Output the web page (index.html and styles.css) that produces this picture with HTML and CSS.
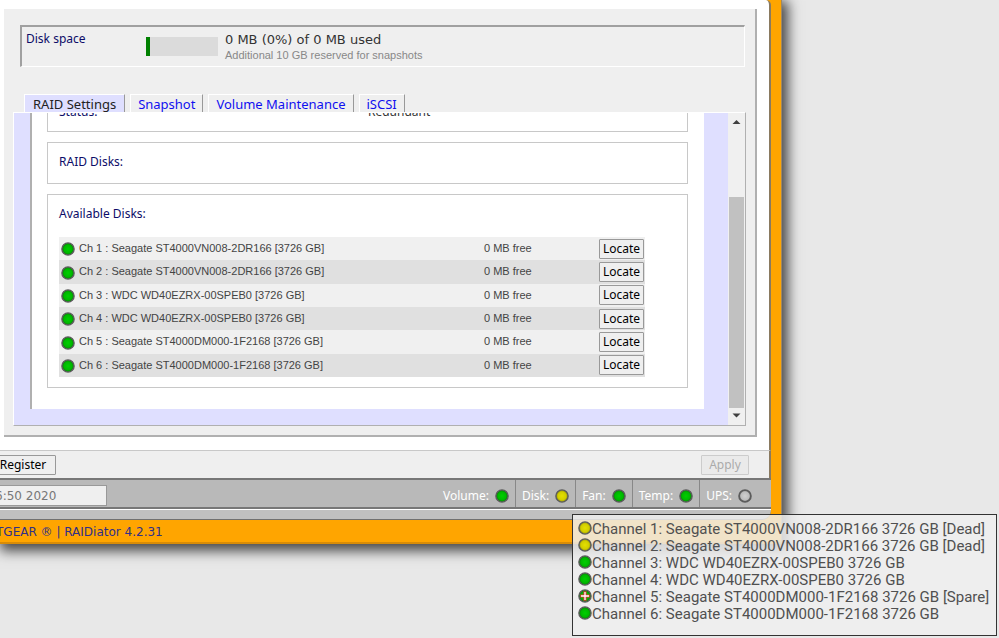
FILE: index.html
```html
<!DOCTYPE html>
<html lang="en">
<head>
<meta charset="utf-8">
<title>RAIDiator - Volume Settings</title>
<link rel="stylesheet" href="styles.css">
</head>
<body>
<svg class="defs" aria-hidden="true">
  <defs>
    <radialGradient id="g-green"><stop offset="0" stop-color="#00d000"/><stop offset="0.65" stop-color="#00b800"/><stop offset="1" stop-color="#087808"/></radialGradient>
    <radialGradient id="g-yellow"><stop offset="0" stop-color="#e4e000"/><stop offset="0.65" stop-color="#d2ce00"/><stop offset="1" stop-color="#8c8a08"/></radialGradient>
    <radialGradient id="g-gray"><stop offset="0" stop-color="#d0d0d0"/><stop offset="0.7" stop-color="#bcbcbc"/><stop offset="1" stop-color="#8a8a8a"/></radialGradient>
    <symbol id="green" viewBox="0 0 14 14"><circle cx="7" cy="7" r="6.1" fill="url(#g-green)" stroke="#5c5c5c" stroke-width="1.4"/></symbol>
    <symbol id="yellow" viewBox="0 0 14 14"><circle cx="7" cy="7" r="6.1" fill="url(#g-yellow)" stroke="#5c5c5c" stroke-width="1.4"/></symbol>
    <symbol id="gray" viewBox="0 0 14 14"><circle cx="7" cy="7" r="5.9" fill="url(#g-gray)" stroke="#5c5c5c" stroke-width="1.8"/></symbol>
    <symbol id="spare" viewBox="0 0 14 14"><circle cx="7" cy="7" r="6.1" fill="url(#g-green)" stroke="#5c5c5c" stroke-width="1.4"/><path d="M7 2.2v9.6M2.2 7h9.6" stroke="#e03030" stroke-width="3.2"/><path d="M7 3v8M3 7h8" stroke="#fff" stroke-width="1.3"/></symbol>
  </defs>
</svg>
<div class="window">
  <div class="page">
    <main class="panel">
      <section class="usage">
        <span class="usage-label">Disk space</span>
        <div class="meter"></div>
        <div class="usage-text">
          <div class="used">0 MB (0%) of 0 MB used</div>
          <div class="reserved">Additional 10 GB reserved for snapshots</div>
        </div>
      </section>
      <nav class="tabs">
        <a class="tab active" href="#">RAID Settings</a>
        <a class="tab" href="#">Snapshot</a>
        <a class="tab" href="#">Volume Maintenance</a>
        <a class="tab" href="#">iSCSI</a>
      </nav>
      <div class="frame">
        <div class="view">
          <div class="sheet">
            <section class="group status"><span>Status:</span><span class="value">Redundant</span></section>
            <section class="group raid"><h2>RAID Disks:</h2></section>
            <section class="group available">
              <h2>Available Disks:</h2>
              <table class="disks">
                <tr><td class="name"><svg class="led"><use href="#green"/></svg>Ch 1 : Seagate ST4000VN008-2DR166 [3726 GB]</td><td class="free">0 MB free</td><td class="act"><button class="btn">Locate</button></td></tr>
                <tr><td class="name"><svg class="led"><use href="#green"/></svg>Ch 2 : Seagate ST4000VN008-2DR166 [3726 GB]</td><td class="free">0 MB free</td><td class="act"><button class="btn">Locate</button></td></tr>
                <tr><td class="name"><svg class="led"><use href="#green"/></svg>Ch 3 : WDC WD40EZRX-00SPEB0 [3726 GB]</td><td class="free">0 MB free</td><td class="act"><button class="btn">Locate</button></td></tr>
                <tr><td class="name"><svg class="led"><use href="#green"/></svg>Ch 4 : WDC WD40EZRX-00SPEB0 [3726 GB]</td><td class="free">0 MB free</td><td class="act"><button class="btn">Locate</button></td></tr>
                <tr><td class="name"><svg class="led"><use href="#green"/></svg>Ch 5 : Seagate ST4000DM000-1F2168 [3726 GB]</td><td class="free">0 MB free</td><td class="act"><button class="btn">Locate</button></td></tr>
                <tr><td class="name"><svg class="led"><use href="#green"/></svg>Ch 6 : Seagate ST4000DM000-1F2168 [3726 GB]</td><td class="free">0 MB free</td><td class="act"><button class="btn">Locate</button></td></tr>
              </table>
            </section>
          </div>
        </div>
        <div class="scrollbar">
          <svg class="arrow" viewBox="0 0 17 17"><path d="M4.500 11L8.500 7L12.500 11z" fill="#404040"/></svg>
          <div class="track"><div class="thumb"></div></div>
          <svg class="arrow" viewBox="0 0 17 17"><path d="M4.500 5.500L8.500 9.500L12.500 5.500z" fill="#404040"/></svg>
        </div>
      </div>
    </main>
  </div>
  <div class="actions">
    <button class="btn register">Register</button>
    <button class="btn apply" disabled>Apply</button>
  </div>
  <div class="statusbar">
    <input class="clock" type="text" value="6:50 2020" aria-label="System time" readonly>
    <div class="lights">
      <span class="light">Volume:<svg class="led"><use href="#green"/></svg></span>
      <span class="light">Disk:<svg class="led"><use href="#yellow"/></svg></span>
      <span class="light">Fan:<svg class="led"><use href="#green"/></svg></span>
      <span class="light">Temp:<svg class="led"><use href="#green"/></svg></span>
      <span class="light">UPS:<svg class="led"><use href="#gray"/></svg></span>
    </div>
  </div>
  <div class="strip"></div>
  <footer class="footer"><span>TGEAR ® | RAIDiator 4.2.31</span></footer>
</div>
<ul class="tooltip">
  <li><svg class="led"><use href="#yellow"/></svg>Channel 1: Seagate ST4000VN008-2DR166 3726 GB [Dead]</li>
  <li><svg class="led"><use href="#yellow"/></svg>Channel 2: Seagate ST4000VN008-2DR166 3726 GB [Dead]</li>
  <li><svg class="led"><use href="#green"/></svg>Channel 3: WDC WD40EZRX-00SPEB0 3726 GB</li>
  <li><svg class="led"><use href="#green"/></svg>Channel 4: WDC WD40EZRX-00SPEB0 3726 GB</li>
  <li><svg class="led"><use href="#spare"/></svg>Channel 5: Seagate ST4000DM000-1F2168 3726 GB [Spare]</li>
  <li><svg class="led"><use href="#green"/></svg>Channel 6: Seagate ST4000DM000-1F2168 3726 GB</li>
</ul>
</body>
</html>
```
FILE: styles.css
```css
* { box-sizing: border-box; }
body {
  margin: 0;
  min-height: 100vh;
  position: relative;
  overflow: hidden;
  background: #e8e8e8;
  font-family: "Noto Sans", Verdana, sans-serif;
  font-size: 12px;
  line-height: 16px;
  color: #333;
}
.defs { position: absolute; width: 0; height: 0; }
.led { width: 14px; height: 14px; flex: none; }

.window {
  margin-right: 217px;
  padding-right: 10px;
  background: #ffa500;
  border-right: 1px solid #a08860;
  box-shadow: 3px 4px 12px 3px #484848;
}
.page {
  background: #fff;
  padding: 9px 12px 13px 4px;
  border-right: 2px solid #8a7a60;
  border-top-right-radius: 5px;
}
.panel {
  background: #efefef;
  border-right: 2px solid #b0b0b0;
  border-bottom: 2px solid #b0b0b0;
  padding: 16px 9px 9px;
}
.usage {
  display: flex;
  height: 42px;
  margin: 0 1px 27px 7px;
  border: 2px solid #fff;
  border-top-color: #a0a0a0;
  border-left-color: #a0a0a0;
  border-right-width: 1px;
  border-bottom-width: 1px;
  padding: 4px;
}
.usage-label { width: 120px; color: #0c0c68; }
.meter {
  width: 72px;
  height: 19px;
  margin: 6px 7px 0 0;
  background: #dbdbdb;
  border-left: 4px solid #008000;
}
.used { font: 13px/18px "DejaVu Sans", Verdana, sans-serif; }
.reserved { font: 11px/12px "Liberation Sans", Arial, sans-serif; color: #888; }

.tabs { display: flex; gap: 5px; padding-left: 11px; font-size: 13px; }
.tab {
  height: 18px;
  line-height: 18px;
  padding: 0 7px;
  color: #1010f0;
  text-decoration: none;
  border-left: 1px solid #fff;
  border-top: 1px solid #fff;
  border-right: 1px solid #999;
}
.tab.active { padding: 0 8px; background: #dfdfff; color: #222; }

.frame {
  display: flex;
  height: 314px;
  border: 1px solid #fff;
  border-right-color: #b0b0b0;
  border-bottom-color: #b0b0b0;
}
.view {
  flex: 1;
  display: flex;
  flex-direction: column;
  justify-content: flex-end;
  overflow: hidden;
  background: #dfdfff;
  padding: 0 24px 16px 16px;
}
.sheet {
  background: #fff;
  border-left: 2px solid #b0b0b0;
  padding: 8px 16px 21px 15px;
}
.group {
  border: 1px solid #c8c8c8;
  padding: 11px;
  margin-bottom: 10px;
  color: #0c0c68;
}
.group h2 { margin: 0; font-size: 12px; line-height: 16px; font-weight: normal; }
.status { display: flex; height: 60px; padding-top: 31px; }
.status span { flex: none; width: 309px; }
.status .value { color: #333; }
.raid { height: 42px; }
.available { height: 194px; margin-bottom: 0; }
.disks {
  width: 586px;
  max-width: 100%;
  height: 140px;
  margin-top: 15px;
  border-collapse: collapse;
  font: 11px/16px "Liberation Sans", Arial, sans-serif;
  color: #444;
}
.disks td { padding: 0; }
.disks tr { background: #f0f0f0; }
.disks tr:nth-child(even) { background: #e0e0e0; }
.disks .name { padding: 0 0 1px 2px; }
.disks .led { vertical-align: middle; margin-right: 4px; }
.disks .free { width: 115px; padding-bottom: 1px; }
.disks .act { width: 46px; }
.btn {
  display: block;
  height: 20px;
  width: 45px;
  padding: 0;
  font: 12px/16px "Noto Sans", Verdana, sans-serif;
  color: #000;
  background: #efefef;
  border: 1px solid #999;
  border-radius: 1px;
}

.scrollbar {
  width: 17px;
  display: flex;
  flex-direction: column;
  background: #f0f0f0;
}
.arrow { width: 17px; height: 17px; flex: none; }
.track { flex: 1; display: flex; align-items: flex-end; padding: 0 1px; }
.thumb { width: 100%; height: 76%; background: #c1c1c1; }

.actions {
  display: flex;
  justify-content: space-between;
  height: 28px;
  padding: 4px 20px 0 0;
  background: #efefef;
  border-top: 1px solid #c8c8c8;
  border-right: 2px solid #8a7a60;
}
.register { width: 66px; margin-left: -10px; }
.apply { width: 48px; color: #aaa; border-color: #ccc; background: #eaeaea; }

.statusbar {
  display: flex;
  justify-content: space-between;
  height: 31px;
  background: #b9b9b9;
  border-top: 2px solid #777;
  border-bottom: 2px solid #777;
}
.clock {
  width: 117px;
  height: 21px;
  margin: 5px 0 0 -10px;
  padding: 0 0 0 4px;
  font: 12px "DejaVu Sans", Verdana, sans-serif;
  color: #777;
  background: #efefef;
  border: 1px solid #999;
}
.lights { display: flex; color: #fff; }
.light {
  display: flex;
  align-items: center;
  gap: 6px;
  padding: 4px 6px 0;
  border-right: 1px solid #888;
}
.light:last-child { padding-right: 19px; border-right: 0; }
.strip {
  height: 11px;
  background: #c0c0c0;
  border-top: 1px solid #fff;
  border-bottom: 1px solid #707070;
  border-bottom-right-radius: 9px;
}
.footer {
  height: 24px;
  padding-top: 4px;
  margin-right: -10px;
  font-family: "DejaVu Sans", Verdana, sans-serif;
  color: #303088;
  border-bottom: 2px solid #d88c08;
}
.footer span { margin-left: -4px; }

.tooltip {
  position: absolute;
  right: 2px;
  bottom: 2px;
  width: 425px;
  height: 122px;
  margin: 0;
  padding: 6px 5px;
  list-style: none;
  font: 15px/17px Roboto, Arial, sans-serif;
  color: #505050;
  background: rgba(238, 238, 238, 0.84);
  border: 1px solid #333;
}
.tooltip li { display: flex; white-space: nowrap; }
```
